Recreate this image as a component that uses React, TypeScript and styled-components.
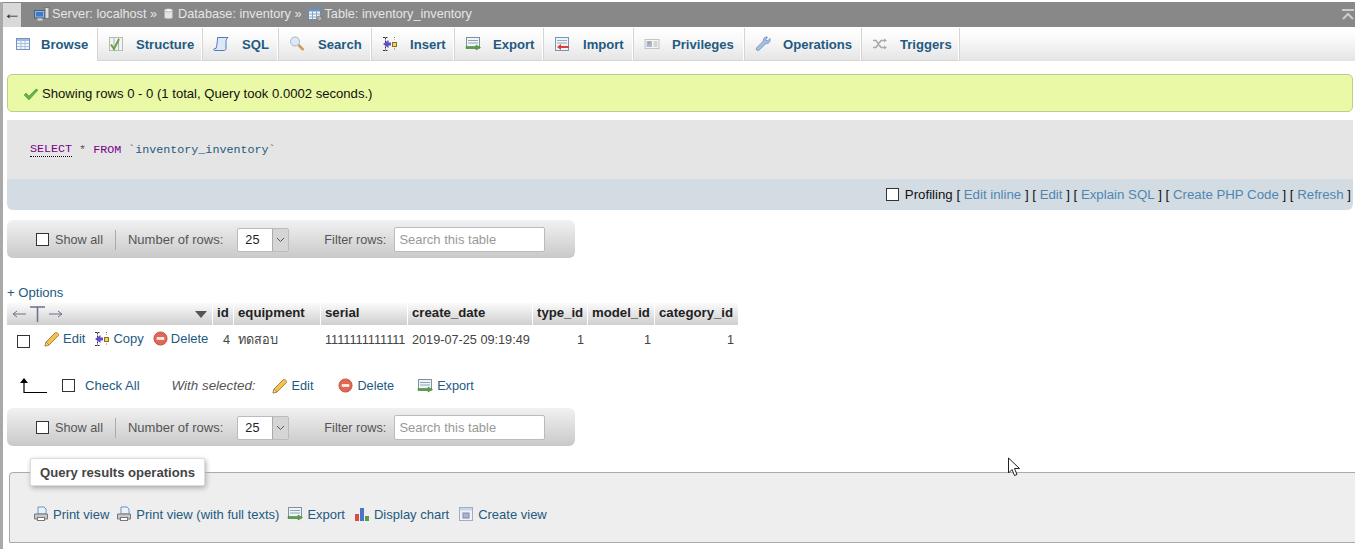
import React from "react";
import styled, { createGlobalStyle } from "styled-components";

const Global = createGlobalStyle`
    html, body {
        margin:0;
        padding:0;
        height:549px;
        overflow:hidden;
        background:#fff;
        font-family:"Liberation Sans", Arial, "Noto Sans", sans-serif;
        font-size:12.7px;
        color:#444;
    }
    a { color:#235a81; text-decoration:none; }
`;

const Page = styled.div`
    display:flex;
    width:1355px;
    height:549px;
    padding-top:2px;
    box-sizing:border-box;
    position:relative;
    overflow:hidden;
`;
const Strip = styled.div`
    width:3px;
    flex:none;
    background:#a9a9a9;
`;
const Main = styled.div`
    flex:1;
    min-width:0;
    display:flex;
    flex-direction:column;
`;
//top bar
const TopBar = styled.div`
    height:25px;
    flex:none;
    display:flex;
    align-items:center;
    background:#888;
    color:#e6e6e6;
    font-size:12.7px;
`;
const BackButton = styled.div`
    width:18px;
    height:24px;
    margin-top:1px;
    padding-bottom:3px;
    box-sizing:border-box;
    display:flex;
    align-items:center;
    justify-content:center;
    background:#d9d9d9;
    color:#222;
    font-size:18px;
    overflow:hidden;
`;
const Crumbs = styled.div`
    flex:1;
    display:flex;
    align-items:center;
    padding:0 0 2px 13px;
    white-space:nowrap;
`;
const Crumb = styled.span<{ $gap: number }>`
    display:inline-flex;
    align-items:center;
    gap:${p => p.$gap}px;
    margin-right:5px;
`;
const Collapse = styled.div`
    width:12px;
    margin-right:1px;
    display:flex;
`;
//tabs
const Tabs = styled.div`
    height:33px;
    flex:none;
    margin-top:1px;
    display:flex;
    background:linear-gradient(#ffffff, #fafafa 30%, #e4e4e4);
`;
const Tab = styled.a<{ $active?: boolean; $w: number; $gap: number }>`
    width:${p => p.$w}px;
    box-sizing:border-box;
    display:flex;
    align-items:center;
    gap:${p => p.$gap}px;
    padding-left:11px;
    border-right:1px solid #fff;
    border-bottom:1px solid ${p => (p.$active ? "#fff" : "#d5d5d5")};
    box-shadow:1px 0 0 #d5d5d5;
    font-size:13.1px;
    font-weight:700;
    color:#235a81;
    white-space:nowrap;
    background:${p => (p.$active ? "#fff" : "transparent")};
    &:first-child { padding-left:12px; }
`;
const Content = styled.div`
    flex:1;
    display:flex;
    flex-direction:column;
    padding:0 2px 0 4px;
`;
//notice
const Notice = styled.div`
    height:38px;
    margin-top:13px;
    box-sizing:border-box;
    display:flex;
    align-items:center;
    gap:3px;
    padding:1px 0 0 15px;
    background:#e9f9a5;
    border:1px solid #b9cf90;
    border-radius:5px;
    color:#111;
    font-size:13.1px;
`;
//sql box
const SqlBox = styled.div`
    margin-top:8px;
    border-radius:0 0 6px 6px;
    overflow:hidden;
`;
const SqlCode = styled.div`
    height:59px;
    box-sizing:border-box;
    padding-left:23px;
    display:flex;
    align-items:center;
    background:#e5e5e5;
    font-family:"Liberation Mono", "Courier New", monospace;
    font-size:11.7px;
    color:#555;
    white-space:pre;
`;
const Keyword = styled.span<{ $dotted?: boolean }>`
    color:#770088;
    border-bottom:${p => (p.$dotted ? "1px dotted #000" : "none")};
`;
const SqlName = styled.span`
    color:#235a81;
`;
const SqlLinks = styled.div`
    height:31px;
    display:flex;
    align-items:center;
    justify-content:flex-end;
    background:#d3dce3;
    color:#111;
    font-size:13.25px;
    white-space:pre;
    padding-right:2px;
`;
const SqlLink = styled.a`
    color:#4f86b0;
`;
const ProfilingLabel = styled.span`
    margin-left:6px;
`;
//navigation toolbar
const Toolbar = styled.div<{ $top: number }>`
    width:568px;
    height:38px;
    margin-top:${p => p.$top}px;
    padding:1px 0 0 29px;
    box-sizing:border-box;
    display:flex;
    align-items:center;
    border-radius:6px;
    background:linear-gradient(#f1f1f1, #c9c9c9);
    color:#555;
    font-size:12.7px;
    white-space:nowrap;
`;
const Box = styled.input.attrs({ type: "checkbox" })`
    appearance:none;
    width:13px;
    height:13px;
    margin:0;
    flex:none;
    background:#fff;
    border:1px solid #333;
    border-radius:0;
`;
const ShowAll = styled.span`
    margin-left:6px;
    padding-right:12px;
    border-right:1px solid #aaa;
    line-height:20px;
`;
const RowsLabel = styled.span`
    margin-left:12px;
    font-size:13px;
`;
const RowSelect = styled.div`
    width:52px;
    height:24px;
    margin-left:14px;
    box-sizing:border-box;
    display:flex;
    background:#fff;
    border:1px solid #bbb;
    border-radius:2px;
    color:#222;
`;
const SelectValue = styled.span`
    flex:1;
    line-height:22px;
    padding-left:7px;
`;
const SelectArrow = styled.span`
    width:15px;
    display:flex;
    align-items:center;
    justify-content:center;
    background:#d5d5d5;
    border-left:1px solid #aaa;
`;
const FilterLabel = styled.span`
    margin-left:35px;
`;
const Search = styled.input`
    width:151px;
    height:25px;
    margin-left:8px;
    box-sizing:border-box;
    padding:0 4px;
    background:#fff;
    border:1px solid #bbb;
    border-radius:2px;
    font:inherit;
    font-size:13px;
    &::placeholder { color:#999; }
`;
const OptionsLink = styled.a`
    margin-top:27px;
    height:16px;
    line-height:16px;
    font-size:13.1px;
`;
//results table
const Results = styled.table`
    margin-top:2px;
    border-collapse:separate;
    border-spacing:0;
    table-layout:fixed;
    width:731px;
`;
const HeadCell = styled.th<{ $w: number }>`
    width:${p => p.$w}px;
    height:22px;
    box-sizing:border-box;
    padding:0 4px 3px;
    border-right:1px solid #fff;
    text-align:left;
    font-size:13.2px;
    font-weight:700;
    color:#222;
    white-space:nowrap;
    background:linear-gradient(#fbfbfb, #cfcfcf);
    &:last-child { border-right:0; }
`;
const ControlHead = styled.div`
    display:flex;
    align-items:center;
    justify-content:space-between;
    padding-right:1px;
    margin-bottom:-3px;
`;
const Cell = styled.td<{ $right?: boolean }>`
    height:27px;
    padding:2px 4px 0;
    box-sizing:border-box;
    text-align:${p => (p.$right ? "right" : "left")};
    font-size:12.7px;
    color:#444;
    white-space:nowrap;
    overflow:hidden;
`;
const ActionCell = styled.td`
    padding:0;
`;
const Actions = styled.div`
    display:flex;
    align-items:center;
    padding-left:10px;
    height:27px;
    font-size:13px;
`;
const RowBox = styled(Box)`
    margin-top:5px;
`;
const Action = styled.a<{ $left: number }>`
    display:inline-flex;
    align-items:center;
    gap:3px;
    margin-left:${p => p.$left}px;
`;
//with selected
const BulkRow = styled.div`
    height:27px;
    margin-top:20px;
    display:flex;
    align-items:center;
    padding-left:12px;
    color:#555;
    white-space:nowrap;
    font-size:12.7px;
`;
const BulkBox = styled(Box)`
    margin-left:15px;
`;
const CheckAll = styled.a`
    margin-left:10px;
    font-size:13.1px;
`;
const WithSelected = styled.i`
    margin-left:32px;
    font-size:13.4px;
`;
const BulkAction = styled.a<{ $left: number }>`
    display:inline-flex;
    align-items:center;
    gap:4px;
    margin-left:${p => p.$left}px;
`;
//operations
const Operations = styled.fieldset`
    margin:12px -20px 0 2px;
    height:85px;
    box-sizing:border-box;
    padding:0 0 0 23px;
    min-inline-size:0;
    background:#eee;
    border:1px solid #aaa;
    border-radius:4px 4px 0 0;
`;
const OperationsTitle = styled.legend`
    margin-left:-3px;
    height:28px;
    box-sizing:border-box;
    padding:0 9px;
    line-height:28px;
    background:#fff;
    border:1px solid #ddd;
    border-radius:2px;
    box-shadow:1px 2px 5px #aaa;
    font-size:13.1px;
    font-weight:700;
    color:#444;
`;
const OperationLinks = styled.div`
    display:flex;
    align-items:center;
    margin-top:20px;
    white-space:nowrap;
    font-size:13px;
`;
const OperationLink = styled.a<{ $left: number }>`
    display:inline-flex;
    align-items:center;
    gap:4px;
    margin-left:${p => p.$left}px;
`;
const Cursor = styled.svg`
    position:absolute;
    left:1007px;
    top:457px;
`;
const IconSvg = styled.svg`
    display:block;
    flex:none;
`;

type IconProps = { size?: number };

const Sv = ({ size = 16, children }: React.PropsWithChildren<IconProps>) => (
    <IconSvg width={size} height={size} viewBox="0 0 16 16">{children}</IconSvg>
);

const ServerIcon = () => (
    <Sv>
        <rect x=".5" y="4.500" width="10" height="7.500" fill="#8fb8e8" stroke="#4a5f80" />
        <rect x="2" y="6" width="7" height="4.500" fill="#3f78c8" />
        <rect x="3.500" y="12.500" width="5" height="2" fill="#d8d8d8" />
        <rect x="11" y="1.500" width="4" height="11" fill="#dcdcdc" stroke="#777" />
    </Sv>
);
const DbIcon = () => (
    <Sv size={13}>
        <path d="M3 4v9c0 2 10 2 10 0V4z" fill="#e4e4e4" stroke="#aaa" />
        <ellipse cx="8" cy="4" rx="5" ry="2" fill="#f8f8f8" stroke="#aaa" />
    </Sv>
);
const TableSmall = () => (
    <Sv>
        <rect x="1.500" y="2.500" width="12" height="11" fill="#f4f7fb" stroke="#6d87a8" />
        <rect x="1.500" y="2.500" width="12" height="3" fill="#6d93c4" />
        <path d="M1.500 8h12M1.500 11h12M5.500 5.500v8M9.500 5.500v8" stroke="#8aa3c0" fill="none" />
        <circle cx="12.500" cy="12.500" r="2.500" fill="#b0b0b0" stroke="#666" strokeWidth=".6" />
    </Sv>
);
const BrowseIcon = () => (
    <Sv>
        <rect x="1.500" y="2.500" width="13" height="11" fill="#f1f6fc" stroke="#6f94bf" />
        <rect x="2" y="3" width="12" height="2" fill="#9cbde0" />
        <path d="M2 7.500h12M2 10.500h12M6 5v8M10 5v8" stroke="#a9c0da" fill="none" />
    </Sv>
);
const StructureIcon = () => (
    <Sv>
        <rect x="1.500" y="1.500" width="13" height="13" fill="#f2f4f2" stroke="#b4bdb4" />
        <path d="M6 2v12M10.500 2v12" stroke="#a8b0c4" fill="none" />
        <path d="M3 8.500l3 4.500 5-10" stroke="#6da24a" strokeWidth="2" fill="none" />
    </Sv>
);
const SqlIcon = () => (
    <Sv>
        <path d="M4.500 1.500h10.500c-1 1-2 2-2 4v7c0 1.200-1 2-2 2H1.500c-1 0-1.200-1.500 0-2h1.500C4 9 4.500 5 4.500 1.500z" fill="#dbe8f7" stroke="#4f7cb5" />
    </Sv>
);
const SearchIcon = () => (
    <Sv>
        <circle cx="6" cy="5.500" r="4.500" fill="#dceaf8" stroke="#a8b4c0" />
        <path d="M9.500 9l5 5" stroke="#cf9c55" strokeWidth="2.500" />
    </Sv>
);
const InsertIcon = () => (
    <Sv>
        <path d="M1 1.500h4.500M1 14.500h4.500M3.500 1.500v13" stroke="#333" strokeDasharray="2 1" fill="none" />
        <path d="M1 8l5.500-4v2.500h2.500v3H6.500V12z" fill="#5f4ec4" />
        <rect x="10.500" y="6.500" width="4" height="4" fill="#f2d45c" stroke="#8a7320" />
        <path d="M12.500 1v2.500M12.500 12.500v2" stroke="#3a9a3a" strokeDasharray="1 1" />
    </Sv>
);
const ExportIcon = () => (
    <Sv>
        <rect x="1.500" y="1.500" width="13" height="10.500" fill="#f1f5f9" stroke="#7d8fa0" />
        <path d="M3 4.500h10M3 7h10" stroke="#8fa3b8" fill="none" />
        <path d="M1 10.500h10V9l4.500 2.500L11 14v-1.500H1z" fill="#5aa045" stroke="#3c7a2c" strokeWidth=".5" />
    </Sv>
);
const ImportIcon = () => (
    <Sv>
        <rect x="1.500" y="1.500" width="13" height="13" fill="#eef3f8" stroke="#7d94b5" />
        <path d="M3 4.500h10M3 7h10" stroke="#9ab" fill="none" />
        <path d="M15 10H7V8l-4 3 4 3v-2h8z" fill="#d8413a" />
    </Sv>
);
const PrivilegesIcon = () => (
    <Sv>
        <rect x="1" y="3.500" width="14" height="9" fill="#f6f6f6" stroke="#c4c4c4" />
        <rect x="2.500" y="5" width="5.500" height="6" fill="#a0bde0" />
        <circle cx="5.200" cy="7" r="1.500" fill="#d8985a" />
        <path d="M9.500 6h4M9.500 8h4M9.500 10h4" stroke="#b4b4b4" />
    </Sv>
);
const WrenchIcon = () => (
    <Sv>
        <path d="M15 2.500l-2.500 2.500-2-1L12.500 1C10 .5 8 2.500 8.500 5L1.500 12c-1 1.500.8 3.200 2.300 2.300L11 7.500c2.500.5 4.500-1.500 4-5z" fill="#a7bfe0" stroke="#7a9ac6" />
    </Sv>
);
const TriggersIcon = () => (
    <Sv>
        <path d="M1 4.500h3l5 7h3M1 11.500h3l5-7h3" stroke="#aaa" strokeWidth="1.500" fill="none" />
        <path d="M12 2.500l3 2-3 2zM12 9.500l3 2-3 2z" fill="#aaa" />
    </Sv>
);
const CheckIcon = () => (
    <Sv>
        <path d="M1 9l2-2 3 3 7-7 2 1-9 10z" fill="#62b04a" stroke="#4a9038" strokeWidth=".5" />
    </Sv>
);
const PencilIcon = () => (
    <Sv>
        <path d="M1 15l1-4L11.500 1.500c1-.8 3.800 2 3 3L5 14z" fill="#f2c14e" stroke="#a8823a" />
        <path d="M1 15l1-4 3 3z" fill="#e8d8b0" stroke="#8a6a30" strokeWidth=".5" />
    </Sv>
);
const DeleteIcon = () => (
    <Sv size={15}>
        <circle cx="8" cy="8" r="7" fill="#de6a55" stroke="#c9503f" />
        <rect x="4" y="6.500" width="8" height="3" fill="#fbeee9" />
    </Sv>
);
const PrintIcon = () => (
    <Sv>
        <path d="M5 1h6l2 2v5H5z" fill="#eaf2fb" stroke="#6d93c4" />
        <path d="M1.500 8h13v5h-13z" fill="#c8c8c8" stroke="#777" />
        <rect x="4.500" y="11.500" width="7" height="3" fill="#fff" stroke="#777" />
    </Sv>
);
const ChartIcon = () => (
    <Sv>
        <rect x="1" y="8" width="4" height="7" fill="#d84c44" />
        <rect x="6" y="2" width="4" height="13" fill="#4a74c8" />
        <rect x="11" y="10" width="4" height="5" fill="#4fa04a" />
    </Sv>
);
const ViewIcon = () => (
    <Sv>
        <rect x="1.500" y="1.500" width="13" height="13" fill="#eef2f8" stroke="#9ab0c8" />
        <rect x="2" y="2" width="12" height="2.500" fill="#c6d6e8" />
        <rect x="5" y="7" width="6" height="5" fill="#a8b4d8" stroke="#889" />
    </Sv>
);

const ColumnArrows = () => (
    <IconSvg width="54" height="18" viewBox="0 0 54 18">
        <path d="M2 9h13M2 9l4-3M2 9l4 3M38 9h13M51 9l-4-3M51 9l-4 3" stroke="#6a6f90" fill="none" />
        <path d="M19 2h15M26.500 2v15" stroke="#6a6f90" strokeWidth="1.500" fill="none" />
    </IconSvg>
);
const SortArrow = () => (
    <IconSvg width="12" height="7" viewBox="0 0 12 7">
        <path d="M0 0h12L6 7z" fill="#555" />
    </IconSvg>
);
const ArrowUp = () => (
    <IconSvg width="28" height="16" viewBox="0 0 28 16">
        <path d="M5 0L1 5h8z" fill="#000" />
        <path d="M5 4v10.500h23" stroke="#000" strokeWidth="1.200" fill="none" />
    </IconSvg>
);
const Chevron = () => (
    <IconSvg width="9" height="6" viewBox="0 0 9 6">
        <path d="M1 1l3.500 3.500L8 1" stroke="#555" fill="none" />
    </IconSvg>
);
const CollapseIcon = () => (
    <IconSvg width="12" height="11" viewBox="0 0 12 11">
        <path d="M0 1h12" stroke="#ccc" strokeWidth="2" />
        <path d="M1 10l5-5 5 5" stroke="#ccc" strokeWidth="2" fill="none" />
    </IconSvg>
);

const tabs = [
    { label: "Browse", icon: <BrowseIcon />, w: 94, gap: 10, active: true },
    { label: "Structure", icon: <StructureIcon />, w: 105, gap: 12 },
    { label: "SQL", icon: <SqlIcon />, w: 76, gap: 13 },
    { label: "Search", icon: <SearchIcon />, w: 93, gap: 13 },
    { label: "Insert", icon: <InsertIcon />, w: 83, gap: 12 },
    { label: "Export", icon: <ExportIcon />, w: 89, gap: 12 },
    { label: "Import", icon: <ImportIcon />, w: 90, gap: 13 },
    { label: "Privileges", icon: <PrivilegesIcon />, w: 111, gap: 12 },
    { label: "Operations", icon: <WrenchIcon />, w: 117, gap: 12 },
    { label: "Triggers", icon: <TriggersIcon />, w: 98, gap: 12 },
];

const columns = [
    { name: "id", w: 21 },
    { name: "equipment", w: 87 },
    { name: "serial", w: 87 },
    { name: "create_date", w: 125 },
    { name: "type_id", w: 55 },
    { name: "model_id", w: 67 },
    { name: "category_id", w: 83 },
];

function NavToolbar({ top }: { top: number }) {
    return (
        <Toolbar $top={top}>
            <Box />
            <ShowAll>Show all</ShowAll>
            <RowsLabel>Number of rows:</RowsLabel>
            <RowSelect>
                <SelectValue>25</SelectValue>
                <SelectArrow><Chevron /></SelectArrow>
            </RowSelect>
            <FilterLabel>Filter rows:</FilterLabel>
            <Search placeholder="Search this table" />
        </Toolbar>
    );
}

function App() {
    return (
        <Page>
            <Global />
            <Strip />
            <Main>
                <TopBar>
                    <BackButton>←</BackButton>
                    <Crumbs>
                        <Crumb $gap={2}><ServerIcon />Server: localhost »</Crumb>
                        <Crumb $gap={3}><DbIcon />Database: inventory »</Crumb>
                        <Crumb $gap={2}><TableSmall />Table: inventory_inventory</Crumb>
                    </Crumbs>
                    <Collapse><CollapseIcon /></Collapse>
                </TopBar>
                <Tabs>
                    {tabs.map(t => (
                        <Tab key={t.label} $active={t.active} $w={t.w} $gap={t.gap}>{t.icon}{t.label}</Tab>
                    ))}
                </Tabs>
                <Content>
                    <Notice><CheckIcon />Showing rows 0 - 0 (1 total, Query took 0.0002 seconds.)</Notice>
                    <SqlBox>
                        <SqlCode>
                            <Keyword $dotted>SELECT</Keyword> * <Keyword>FROM</Keyword> `<SqlName>inventory_inventory</SqlName>`
                        </SqlCode>
                        <SqlLinks>
                            <Box /><ProfilingLabel>Profiling</ProfilingLabel> [ <SqlLink>Edit inline</SqlLink> ] [ <SqlLink>Edit</SqlLink> ] [ <SqlLink>Explain SQL</SqlLink> ] [ <SqlLink>Create PHP Code</SqlLink> ] [ <SqlLink>Refresh</SqlLink> ]
                        </SqlLinks>
                    </SqlBox>
                    <NavToolbar top={10} />
                    <OptionsLink>+ Options</OptionsLink>
                    <Results>
                        <thead>
                            <tr>
                                <HeadCell $w={206}>
                                    <ControlHead><ColumnArrows /><SortArrow /></ControlHead>
                                </HeadCell>
                                {columns.map(c => <HeadCell key={c.name} $w={c.w}>{c.name}</HeadCell>)}
                            </tr>
                        </thead>
                        <tbody>
                            <tr>
                                <ActionCell>
                                    <Actions>
                                        <RowBox />
                                        <Action $left={14}><PencilIcon />Edit</Action>
                                        <Action $left={9}><InsertIcon />Copy</Action>
                                        <Action $left={9}><DeleteIcon />Delete</Action>
                                    </Actions>
                                </ActionCell>
                                <Cell $right>4</Cell>
                                <Cell>ทดสอบ</Cell>
                                <Cell>1111111111111</Cell>
                                <Cell>2019-07-25 09:19:49</Cell>
                                <Cell $right>1</Cell>
                                <Cell $right>1</Cell>
                                <Cell $right>1</Cell>
                            </tr>
                        </tbody>
                    </Results>
                    <BulkRow>
                        <ArrowUp />
                        <BulkBox />
                        <CheckAll>Check All</CheckAll>
                        <WithSelected>With selected:</WithSelected>
                        <BulkAction $left={16}><PencilIcon />Edit</BulkAction>
                        <BulkAction $left={25}><DeleteIcon />Delete</BulkAction>
                        <BulkAction $left={23}><ExportIcon />Export</BulkAction>
                    </BulkRow>
                    <NavToolbar top={9} />
                    <Operations>
                        <OperationsTitle>Query results operations</OperationsTitle>
                        <OperationLinks>
                            <OperationLink $left={0}><PrintIcon />Print view</OperationLink>
                            <OperationLink $left={7}><PrintIcon />Print view (with full texts)</OperationLink>
                            <OperationLink $left={8}><ExportIcon />Export</OperationLink>
                            <OperationLink $left={9}><ChartIcon />Display chart</OperationLink>
                            <OperationLink $left={9}><ViewIcon />Create view</OperationLink>
                        </OperationLinks>
                    </Operations>
                </Content>
            </Main>
            <Cursor width="14" height="20" viewBox="0 0 14 20">
                <path d="M1.500 1v15l3.500-3.500 2.500 6 2.500-1-2.500-6h5z" fill="#fff" stroke="#222" />
            </Cursor>
        </Page>
    );
}

export default App;
